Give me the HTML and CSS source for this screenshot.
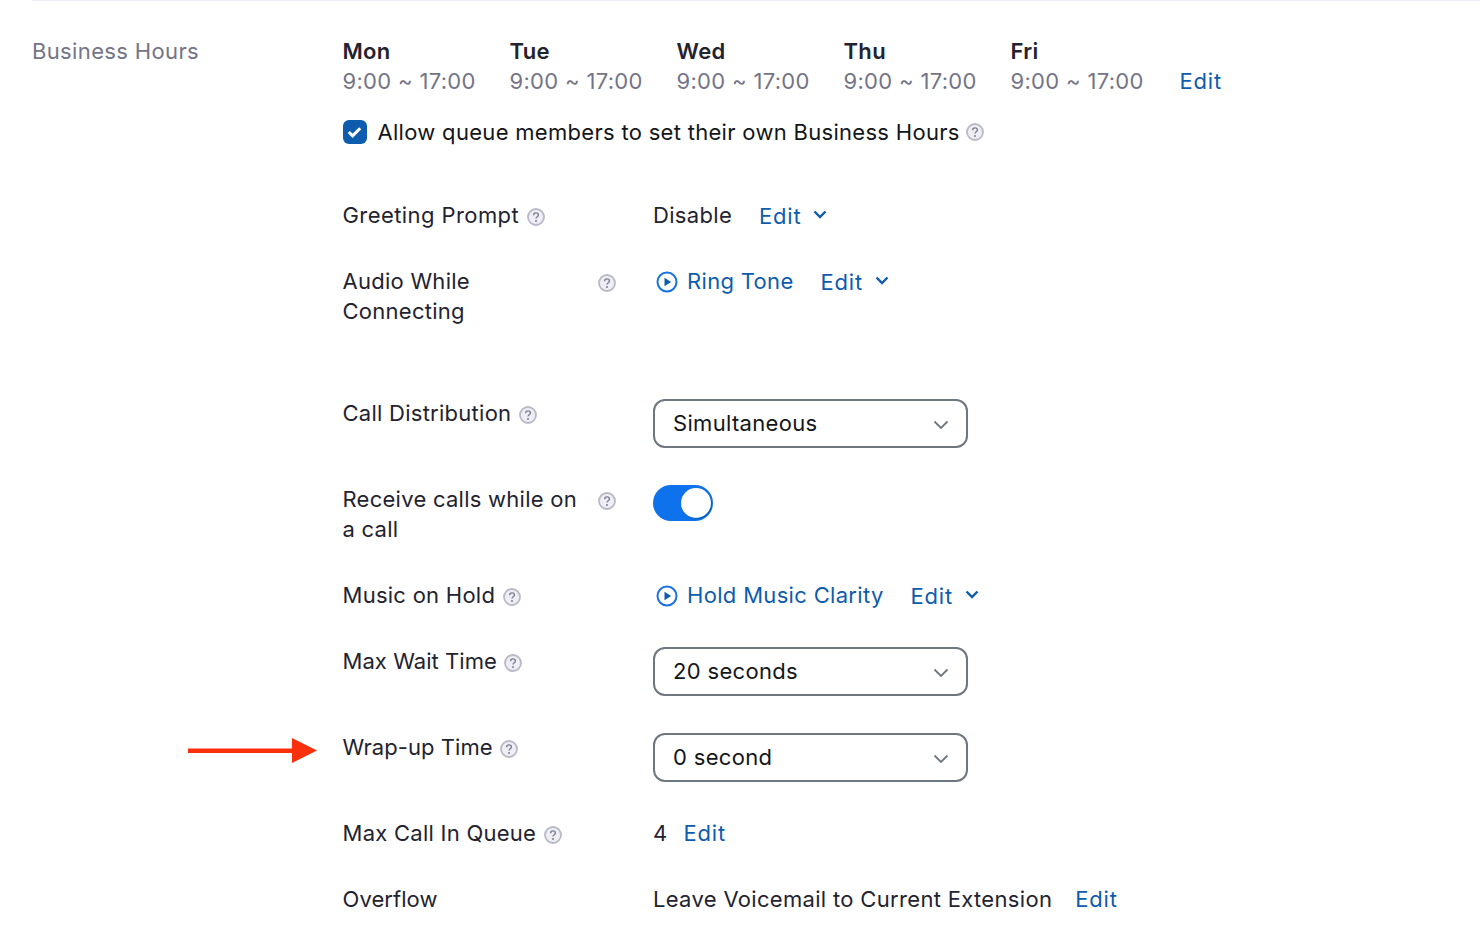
FILE: index.html
```html
<!DOCTYPE html>
<html lang="en">
<head>
    <meta charset="UTF-8">
    <meta name="viewport" content="width=device-width, initial-scale=1.0">
    <title>Business Hours</title>
    <link rel="stylesheet" href="styles.css">
</head>
<body>
    <svg class="defs" width="0" height="0">
        <symbol id="help" viewBox="0 0 18 18">
            <circle cx="9" cy="9" r="8" fill="#eeeef4" stroke="#b9b9c8" stroke-width="1.800"/>
            <path d="M6.600 7.200c0-1.400 1-2.300 2.400-2.300s2.400.9 2.400 2.100c0 1.800-2.400 1.700-2.400 3.600" fill="none" stroke="#7d7d92" stroke-width="1.400"/>
            <circle cx="9" cy="13" r="1" fill="#7d7d92"/>
        </symbol>
        <symbol id="caret" viewBox="0 0 14 9">
            <path d="M1.500 1.500 7 7l5.500-5.500" fill="none" stroke="#0e5cad" stroke-width="2.400"/>
        </symbol>
        <symbol id="play" viewBox="0 0 22 22">
            <circle cx="11" cy="11" r="9.500" fill="none" stroke="#1a71e0" stroke-width="2"/>
            <path d="M8.500 6.800v8.400l6.600-4.200z" fill="#0e5cad"/>
        </symbol>
        <symbol id="chevron" viewBox="0 0 16 10">
            <path d="M1.500 1.500 8 8l6.500-6.500" fill="none" stroke="#6e7680" stroke-width="1.800"/>
        </symbol>
    </svg>

    <div class="section">
        <div class="section-label">Business Hours</div>
        <div class="section-body">
            <div class="hours">
                <div class="day"><b>Mon</b><span>9:00 ~ 17:00</span></div>
                <div class="day"><b>Tue</b><span>9:00 ~ 17:00</span></div>
                <div class="day"><b>Wed</b><span>9:00 ~ 17:00</span></div>
                <div class="day"><b>Thu</b><span>9:00 ~ 17:00</span></div>
                <div class="day"><b>Fri</b><span>9:00 ~ 17:00</span></div>
                <a class="link edit-word hours-edit">Edit</a>
            </div>
            <div class="allow">
                <span class="checkbox">
                    <svg width="15" height="12" viewBox="0 0 15 12"><path d="M1.800 6 5.600 9.800 13.200 2.200" fill="none" stroke="#fff" stroke-width="3"/></svg>
                </span>
                <span class="allow-text">Allow queue members to set their own Business Hours</span>
                <svg class="help"><use href="#help"/></svg>
            </div>

            <div class="row">
                <div class="label label-wide">Greeting Prompt <svg class="help"><use href="#help"/></svg></div>
                <div class="value">
                    <span class="text">Disable</span>
                    <a class="link edit-word edit">Edit</a>
                    <svg class="caret"><use href="#caret"/></svg>
                </div>
            </div>
            <div class="row row-tall">
                <div class="label label-wrap"><span class="wrap-text">Audio While Connecting</span><svg class="help"><use href="#help"/></svg></div>
                <div class="value">
                    <svg class="play"><use href="#play"/></svg>
                    <a class="link">Ring Tone</a>
                    <a class="link edit-word edit">Edit</a>
                    <svg class="caret"><use href="#caret"/></svg>
                </div>
            </div>
            <div class="row">
                <div class="label">Call Distribution <svg class="help"><use href="#help"/></svg></div>
                <div class="select">Simultaneous <svg class="chevron"><use href="#chevron"/></svg></div>
            </div>
            <div class="row">
                <div class="label label-wrap"><span class="wrap-text">Receive calls while on a call</span><svg class="help"><use href="#help"/></svg></div>
                <div class="toggle"><span class="knob"></span></div>
            </div>
            <div class="row">
                <div class="label">Music on Hold <svg class="help"><use href="#help"/></svg></div>
                <div class="value">
                    <svg class="play"><use href="#play"/></svg>
                    <a class="link">Hold Music Clarity</a>
                    <a class="link edit-word edit">Edit</a>
                    <svg class="caret"><use href="#caret"/></svg>
                </div>
            </div>
            <div class="row">
                <div class="label label-tight">Max Wait Time <svg class="help"><use href="#help"/></svg></div>
                <div class="select">20 seconds <svg class="chevron"><use href="#chevron"/></svg></div>
            </div>
            <div class="row">
                <div class="label label-tight">Wrap-up Time <svg class="help"><use href="#help"/></svg></div>
                <div class="select">0 second <svg class="chevron"><use href="#chevron"/></svg></div>
                <svg class="arrow" width="130" height="26" viewBox="0 0 130 26"><path d="M0 10.500h104V0l25 12.500-25 12.500V15H0z" fill="#f9300b"/></svg>
            </div>
            <div class="row">
                <div class="label">Max Call In Queue <svg class="help"><use href="#help"/></svg></div>
                <div class="value">
                    <span class="text">4</span>
                    <a class="link edit-word edit-near">Edit</a>
                </div>
            </div>
            <div class="row">
                <div class="label label-tight">Overflow</div>
                <div class="value">
                    <span class="text">Leave Voicemail to Current Extension</span>
                    <a class="link edit-word edit-last">Edit</a>
                </div>
            </div>
        </div>
    </div>
</body>
</html>
```

FILE: styles.css
```css
body {
    font-family: Inter, "Liberation Sans", sans-serif;
    font-size: 22px;
    line-height: 30px;
    letter-spacing: .32px;
    margin: 0;
    background-color: #fff;
    color: #23232f;
    overflow: hidden;
}
.defs {
    position: absolute;
}
.section {
    display: flex;
    margin-left: 32px;
    padding-top: 35px;
    border-top: 1px solid #ededf4;
}
.section-label {
    width: 310.5px;
    color: #747487;
    letter-spacing: .36px;
}
.section-body {
    flex: 1;
}
.hours {
    display: flex;
    align-items: flex-end;
}
.day {
    display: flex;
    flex-direction: column;
    width: 167px;
    color: #747487;
}
.day b {
    font-weight: 600;
    color: #23232f;
}
.link {
    color: #0e5cad;
}
.edit-word {
    letter-spacing: .8px;
}
.hours-edit {
    margin-left: 2px;
}
.allow {
    display: flex;
    align-items: center;
    margin-top: 21px;
    margin-bottom: 54px;
    color: #131619;
    letter-spacing: .3px;
}
.checkbox {
    display: flex;
    align-items: center;
    justify-content: center;
    width: 24px;
    height: 24px;
    margin: 0 11px 0 0;
    border-radius: 6px;
    background-color: #0e5cad;
}
.allow-text {
    margin-right: 5px;
}
.help {
    width: 18px;
    height: 18px;
    flex: none;
    vertical-align: -3px;
    margin-left: 1px;
}
.row {
    display: flex;
    position: relative;
    margin-bottom: 36px;
}
.row-tall {
    margin-bottom: 72px;
}
.label {
    width: 310.5px;
    flex: none;
    margin: -1px 0 1px;
    letter-spacing: .26px;
}
.label-wide {
    letter-spacing: .42px;
}
.label-tight {
    letter-spacing: .06px;
}
.label-wrap {
    display: flex;
    align-items: flex-start;
}
.label-wrap .help {
    margin: 8px 0 0 15px;
}
.wrap-text {
    width: 240px;
}
.value {
    display: flex;
    align-items: center;
    height: 30px;
    margin: -1px 0 1px;
}
.edit {
    margin: 2px 0 0 27px;
}
.edit-near {
    margin-left: 16px;
}
.edit-last {
    margin-left: 23px;
}
.text {
    color: #23232f;
}
.caret {
    width: 14px;
    height: 9px;
    margin: 0 0 1px 12px;
}
.play {
    width: 22px;
    height: 22px;
    margin: 2px 9px 0 3px;
}
.select {
    display: flex;
    align-items: center;
    justify-content: space-between;
    box-sizing: border-box;
    width: 315px;
    height: 49px;
    margin-bottom: 1px;
    padding: 0 17px 2px 18px;
    border: 2px solid #6e7680;
    border-radius: 12px;
    color: #131619;
}
.chevron {
    width: 16px;
    height: 10px;
    margin-top: 4px;
}
.toggle {
    display: flex;
    justify-content: flex-end;
    align-items: center;
    box-sizing: border-box;
    width: 60px;
    height: 36px;
    padding-right: 2px;
    border-radius: 18px;
    background-color: #0e72ed;
}
.knob {
    width: 30px;
    height: 30px;
    border-radius: 50%;
    background-color: #fff;
    box-shadow: 1px 1px 1px #0e5cad;
}
.arrow {
    position: absolute;
    left: -154.5px;
    top: 5px;
}
```
